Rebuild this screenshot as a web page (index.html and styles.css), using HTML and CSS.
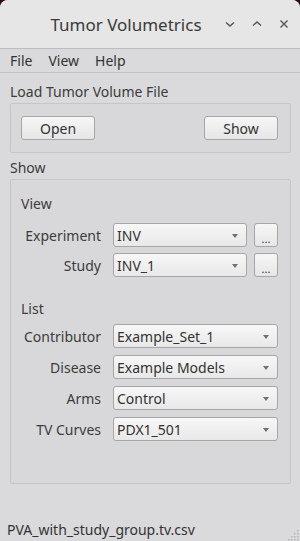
FILE: index.html
```html
<!DOCTYPE html>
<html lang="en">

<head>
    <meta charset="UTF-8">
    <meta name="viewport" content="width=device-width, initial-scale=1.0">
    <title>Tumor Volumetrics</title>
    <link rel="stylesheet" href="styles.css">
</head>

<body>
    <div class="window">
        <div class="titlebar">
            <span class="title">Tumor Volumetrics</span>
            <div class="wm-buttons">
                <svg class="wm-btn" width="12" height="12" viewBox="0 0 12 12">
                    <path d="M2 4.5 L6 8 L10 4.5" fill="none" stroke="#555" stroke-width="1.4" />
                </svg>
                <svg class="wm-btn" width="12" height="12" viewBox="0 0 12 12">
                    <path d="M2 7.5 L6 4 L10 7.5" fill="none" stroke="#555" stroke-width="1.4" />
                </svg>
                <svg class="wm-btn" width="12" height="12" viewBox="0 0 12 12">
                    <path d="M2.5 2.5 L9.5 9.5 M9.5 2.5 L2.5 9.5" fill="none" stroke="#555" stroke-width="1.4" />
                </svg>
            </div>
        </div>

        <div class="menubar">
            <span class="menu-item">File</span>
            <span class="menu-item">View</span>
            <span class="menu-item">Help</span>
        </div>

        <div class="content">
            <div class="section-title">Load Tumor Volume File</div>
            <div class="groupbox load-box">
                <button class="btn">Open</button>
                <button class="btn">Show</button>
            </div>

            <div class="section-title">Show</div>
            <div class="groupbox show-box">
                <div class="sub-title">View</div>
                <div class="form-row">
                    <label class="form-label">Experiment</label>
                    <div class="combo">INV<span class="arrow"></span></div>
                    <button class="btn dots">...</button>
                </div>
                <div class="form-row">
                    <label class="form-label">Study</label>
                    <div class="combo">INV_1<span class="arrow"></span></div>
                    <button class="btn dots">...</button>
                </div>

                <div class="sub-title list-title">List</div>
                <div class="form-row list-row">
                    <label class="form-label">Contributor</label>
                    <div class="combo">Example_Set_1<span class="arrow"></span></div>
                </div>
                <div class="form-row list-row">
                    <label class="form-label">Disease</label>
                    <div class="combo">Example Models<span class="arrow"></span></div>
                </div>
                <div class="form-row list-row">
                    <label class="form-label">Arms</label>
                    <div class="combo">Control<span class="arrow"></span></div>
                </div>
                <div class="form-row list-row">
                    <label class="form-label">TV Curves</label>
                    <div class="combo">PDX1_501<span class="arrow"></span></div>
                </div>
            </div>
        </div>

        <div class="statusbar">
            <span>PVA_with_study_group.tv.csv</span>
            <svg class="grip" width="12" height="12" viewBox="0 0 12 12">
                <g fill="#b4b4b6">
                    <rect x="9" y="1" width="1.5" height="1.5" />
                    <rect x="6" y="4" width="1.5" height="1.5" />
                    <rect x="9" y="4" width="1.5" height="1.5" />
                    <rect x="3" y="7" width="1.5" height="1.5" />
                    <rect x="6" y="7" width="1.5" height="1.5" />
                    <rect x="9" y="7" width="1.5" height="1.5" />
                    <rect x="0" y="10" width="1.5" height="1.5" />
                    <rect x="3" y="10" width="1.5" height="1.5" />
                    <rect x="6" y="10" width="1.5" height="1.5" />
                    <rect x="9" y="10" width="1.5" height="1.5" />
                </g>
            </svg>
        </div>
    </div>
</body>

</html>
```

FILE: styles.css
```css
* {
    box-sizing: border-box;
}

body {
    margin: 0;
    background: #2c0a1e;
    font-family: "Noto Sans", "Open Sans", sans-serif;
    font-size: 14px;
    color: #3c3c3c;
}

.window {
    width: 300px;
    height: 541px;
    background: #dadadc;
    border-radius: 8px 8px 0 0;
    display: flex;
    flex-direction: column;
    overflow: hidden;
}

/* title bar */

.titlebar {
    height: 49px;
    flex-shrink: 0;
    background: #e6e6e7;
    border-bottom: 1px solid #bdbdbf;
    display: flex;
    align-items: center;
}

.title {
    flex: 1;
    text-align: center;
    font-size: 17px;
    color: #3a3a3a;
    padding-left: 28px;
}

.wm-buttons {
    width: 76px;
    display: flex;
    gap: 15px;
}

/* menu */

.menubar {
    height: 24px;
    flex-shrink: 0;
    display: flex;
    align-items: center;
    padding-left: 10px;
    gap: 16px;
    border-bottom: 1px solid #c2c2c4;
    color: #333;
}

/* main area */

.content {
    flex: 1;
    padding: 9px 9px 0 10px;
}

.section-title {
    line-height: 20px;
    margin-bottom: 1px;
}

.groupbox {
    border: 1px solid #c6c6c8;
    border-radius: 2px;
    background: #d8d8da;
}

.load-box {
    height: 50px;
    display: flex;
    justify-content: space-between;
    padding: 12px 12px 0 10px;
    margin-bottom: 5px;
}

.btn {
    font-family: inherit;
    font-size: 14px;
    color: #333;
    height: 24px;
    width: 74px;
    border: 1px solid #a6a6a8;
    border-radius: 3px;
    background: linear-gradient(#f6f6f6, #e6e6e6);
    padding: 0;
}

.show-box {
    height: 305px;
    padding: 14px 12px 0 10px;
}

.sub-title {
    line-height: 20px;
    margin-bottom: 9px;
}

.list-title {
    margin-top: 22px;
    margin-bottom: 5px;
}

.form-row {
    display: flex;
    align-items: center;
    gap: 7px;
    margin-bottom: 6px;
}

.list-row {
    margin-bottom: 7px;
}

.form-label {
    width: 80px;
    margin-right: 5px;
    text-align: right;
}

.combo {
    flex: 1;
    height: 24px;
    border: 1px solid #a6a6a8;
    border-radius: 3px;
    background: linear-gradient(#f7f7f7, #e8e8e8);
    display: flex;
    align-items: center;
    padding-left: 3px;
    color: #333;
    position: relative;
}

.arrow {
    position: absolute;
    right: 8px;
    top: 10px;
    border-left: 3.5px solid transparent;
    border-right: 3.5px solid transparent;
    border-top: 4px solid #707070;
}

.dots {
    width: 24px;
    font-size: 11px;
    line-height: 1;
    padding-top: 6px;
}

/* status bar */

.statusbar {
    height: 24px;
    flex-shrink: 0;
    display: flex;
    align-items: center;
    justify-content: space-between;
    padding-left: 7px;
    color: #333;
}

.grip {
    align-self: flex-end;
}
```
